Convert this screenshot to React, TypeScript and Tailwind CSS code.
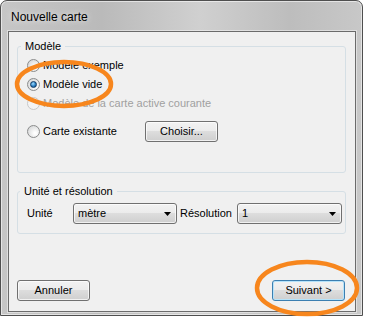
const BTN_BG =
  "bg-[linear-gradient(#f2f2f2_0%,#ebebeb_50%,#dddddd_50%,#cfcfcf_100%)]";

function Radio({ checked, disabled }: { checked?: boolean; disabled?: boolean }) {
  return (
    <span
      className={
        "flex size-[13px] shrink-0 items-center justify-center rounded-full border " +
        (disabled
          ? "border-[#c8c8c8] bg-[#f4f4f4]"
          : "border-[#8b8c8c] bg-[radial-gradient(circle_at_65%_65%,#ffffff_10%,#d2d3d4_90%)]")
      }
    >
      {checked && (
        <span className="size-[7px] rounded-full border border-[#103a63] bg-[radial-gradient(circle_at_40%_35%,#9fdcff_0%,#2a7fc4_55%,#0d3d72_100%)]" />
      )}
    </span>
  );
}

function RadioRow({
  label,
  checked,
  disabled,
}: {
  label: string;
  checked?: boolean;
  disabled?: boolean;
}) {
  return (
    <div className="flex h-[19px] items-center">
      <Radio checked={checked} disabled={disabled} />
      <span className={"ml-[3px] " + (disabled ? "text-[#a0a0a0]" : "text-black")}>{label}</span>
    </div>
  );
}

function Button({ label, primary, className = "" }: { label: string; primary?: boolean; className?: string }) {
  return (
    <button
      className={
        `flex h-[21px] w-[73px] items-center justify-center rounded-[3px] border ${BTN_BG} ` +
        (primary
          ? "border-[#3c7fb1] shadow-[inset_0_0_0_1px_#b6e3fa] "
          : "border-[#707070] shadow-[inset_0_0_0_1px_rgba(255,255,255,0.7)] ") +
        className
      }
    >
      {label}
    </button>
  );
}

function Combo({ value, width }: { value: string; width: string }) {
  return (
    <div
      className={`flex h-[21px] ${width} items-center justify-between rounded-[3px] border border-[#707070] ${BTN_BG} pl-[4px] pr-[5px] shadow-[inset_0_0_0_1px_rgba(255,255,255,0.7)]`}
    >
      <span>{value}</span>
      <svg width="7" height="4" viewBox="0 0 7 4">
        <path d="M0 0h7L3.5 4z" fill="#000" />
      </svg>
    </div>
  );
}

export default function App() {
  return (
    <div className="h-[319px] w-[365px] bg-white font-['Liberation_Sans',Arial,sans-serif] text-[11px] leading-[13px] text-black">
      <div className="relative flex h-[316px] w-[363px] flex-col rounded-t-[7px] border border-[#4f4f4f] bg-[linear-gradient(90deg,#c6c6c6,#bababa_28%,#d0d0d0_55%,#bdbdbd_80%,#c8c8c8)] shadow-[inset_0_0_0_1px_rgba(255,255,255,0.55)]">
        <div className="flex h-[30px] shrink-0 items-center px-[10px] pt-[2px] text-[12px] text-black [text-shadow:0_0_6px_rgba(255,255,255,0.9)]">
          Nouvelle carte
        </div>

        <div className="mb-[3px] ml-[7px] mr-[6px] flex flex-1 flex-col border border-[#6b6b6b] bg-[#f0f0f0] pb-[10px] pl-[8px] pr-[9px] pt-[7px] shadow-[0_0_0_1px_rgba(255,255,255,0.45)]">
          <fieldset className="h-[134px] rounded-[3px] border border-[#d5dfe5]">
            <legend className="ml-[3px] px-[4px] leading-[14px]">Modèle</legend>
            <div className="pl-[9px] pt-[3px]">
              <RadioRow label="Modèle exemple" />
              <RadioRow label="Modèle vide" checked />
              <RadioRow label="Modèle de la carte active courante" disabled />
              <div className="mt-[8px] flex h-[21px] items-center">
                <Radio />
                <span className="ml-[3px] w-[102px]">Carte existante</span>
                <Button label="Choisir..." />
              </div>
            </div>
          </fieldset>

          <fieldset className="mt-[11px] h-[50px] rounded-[3px] border border-[#d5dfe5]">
            <legend className="ml-[2px] px-[4px] leading-[14px]">Unité et résolution</legend>
            <div className="flex items-center pl-[9px] pt-[5px]">
              <span className="w-[46px]">Unité</span>
              <Combo value="mètre" width="w-[104px]" />
              <span className="ml-[3px] w-[57px]">Résolution</span>
              <Combo value="1" width="w-[105px]" />
            </div>
          </fieldset>

          <div className="mt-auto flex items-center justify-between">
            <Button label="Annuler" />
            <Button label="Suivant >" primary className="mr-[1px]" />
          </div>
        </div>

        <svg
          className="pointer-events-none absolute -left-px -top-px"
          width="365"
          height="319"
          viewBox="0 0 365 319"
        >
          <ellipse cx="64" cy="84" rx="47" ry="22" fill="none" stroke="#f7861d" strokeWidth="4.5" />
          <ellipse cx="307" cy="288" rx="50" ry="26" fill="none" stroke="#f7861d" strokeWidth="4.5" />
        </svg>
      </div>
    </div>
  );
}
